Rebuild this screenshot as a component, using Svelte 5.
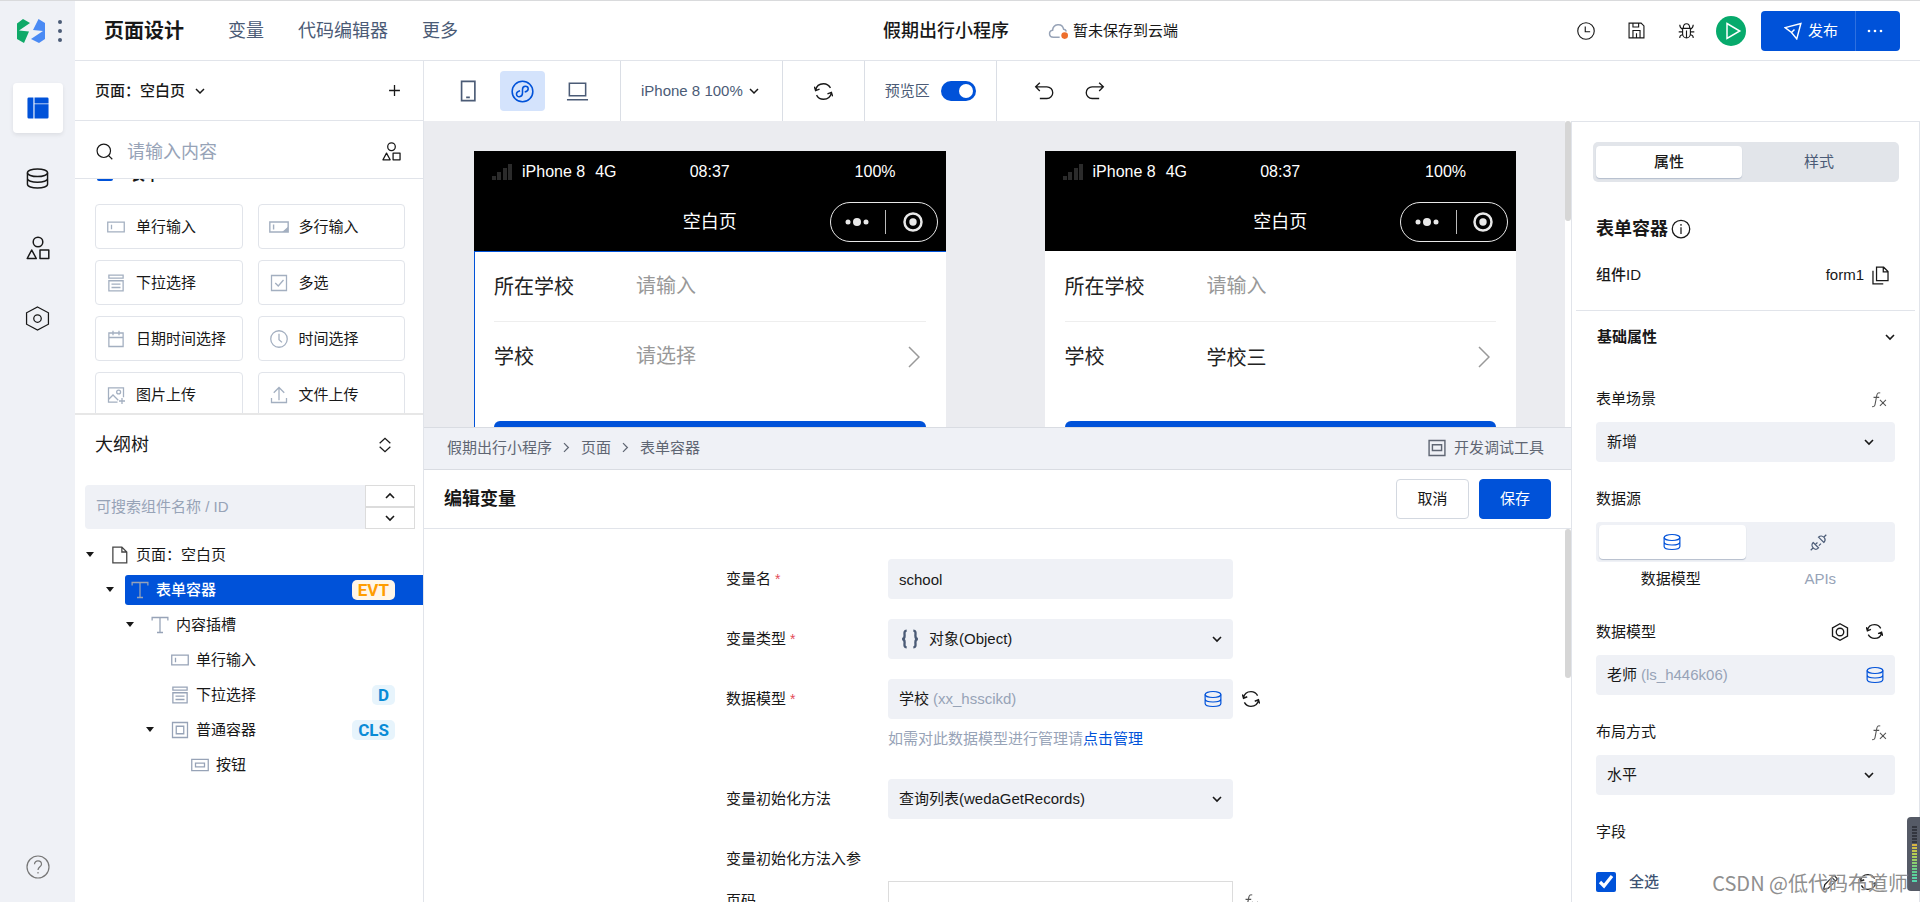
<script lang="ts">
  // 24x24 line icons, drawn with currentColor.
  const icons: Record<string, string> = {
    layout:
      '<path d="M.5 2A1.500 1.500 0 0 1 2 .5h5v23H2A1.500 1.500 0 0 1 .5 22zM8.200 8H23.500v14a1.500 1.500 0 0 1-1.500 1.500H8.200zM8.200.5H22A1.500 1.500 0 0 1 23.500 2v4.500H8.200z" fill="currentColor" stroke="none"/><path d="M8.200 7.200h15.300" opacity=".5"/>',
    database:
      '<ellipse cx="12" cy="6" rx="10.500" ry="4"/><path d="M1.500 6v12c0 2.300 4.700 4 10.500 4s10.500-1.700 10.500-4V6M1.500 12c0 2.300 4.700 4 10.500 4s10.500-1.700 10.500-4"/>',
    shapes:
      '<circle cx="12" cy="6" r="4.800"/><path d="M5.700 14 10.300 22.500H1.200zM14 14h8.800v8.500H14z" stroke-linejoin="round"/>',
    hexagon: '<path d="M12 1 22.500 6.500v11L12 23 1.500 17.500v-11z"/><circle cx="12" cy="12" r="3.600"/>',
    nut: '<path d="M12 1 22 6.500v11L12 23 2 17.500v-11z"/><circle cx="12" cy="12" r="5"/>',
    help:
      '<circle cx="12" cy="12" r="11"/><path d="M8.500 9.200c0-4.500 7-4.300 7 0 0 2.600-3.500 2.600-3.500 5.800M12 17v1.600"/>',
    chevronDown: '<path d="m6 9 6 6 6-6"/>',
    chevronUp: '<path d="m6 15 6-6 6 6"/>',
    chevronRight: '<path d="m8 5 7 7-7 7"/>',
    plus: '<path d="M12 2v20M2 12h20"/>',
    search: '<circle cx="11" cy="11" r="9.500"/><path d="m17.500 17.500 5.500 5.500"/>',
    sort: '<path d="M4 9.500 12 2l8 7.500M4 14.500 12 22l8-7.500"/>',
    phone: '<path d="M5 1.500h14.500v21H5zM10 19h4"/>',
    mini:
      '<circle cx="12" cy="12" r="10.800"/><path d="M9.500 11.200c-6 1.500-3.800 6.800-.7 6.300 2.600-.4 3.200-2.200 3.200-4V10c0-2 .8-3.500 3-3.500 3.600 0 4.500 4.800-.7 6"/>',
    laptop: '<path d="M3.500 3.500h17v13h-17zM1 20.500h22"/>',
    refresh:
      '<path d="M2 10.500C3 5 7 2.200 12 2.200c3.800 0 7 2 8.800 5.300M22 13.500c-1 5.500-5 8.300-10 8.300-3.800 0-7-2-8.800-5.300M.5 6l1.500 5 5-2M23.500 18l-1.500-5-5 2"/>',
    undo: '<path d="M7 2 2 7l5 5M2 7h13.500a7 7 0 0 1 0 14H7"/>',
    redo: '<path d="m17 2 5 5-5 5M22 7H8.500a7 7 0 0 0 0 14H17"/>',
    cloud:
      '<path d="M14 19.500H6.500C.500 19.500.500 12 5.500 11.200c.5-8 11.500-9.500 13.300-1.200 1.600.3 2.700 1.200 3.200 2.500"/><circle cx="20" cy="17.500" r="4" fill="#ed6f2d" stroke="none"/>',
    clock: '<circle cx="12" cy="12" r="11"/><path d="M11 6v7h6.500"/>',
    save: '<path d="M1.500 1.500h17l4 4v17h-21zM7 22V12h10v10M7 2v5h8V2M12 16v6"/>',
    bug:
      '<path d="M6.500 9h11v7.500a5.500 6 0 0 1-11 0zM7.500 8.500c0-8 9-8 9 0M12 12v10M2.500 4c0 3 1.500 5 4 6.500M21.500 4c0 3-1.500 5-4 6.500M1 14h5.500M17.500 14H23M2.500 22.500c0-3 1.500-4.500 4.500-4.500M21.500 22.500c0-3-1.500-4.500-4.500-4.500"/>',
    play: '<path d="m4 2 17 10L4 22z"/>',
    send: '<path d="M1.500 7.500 22.500 2 17 22.500 10 14zM10 14l4-4"/>',
    more: '<g fill="currentColor" stroke="none"><circle cx="3" cy="12" r="2"/><circle cx="12" cy="12" r="2"/><circle cx="21" cy="12" r="2"/></g>',
    input: '<path d="M1 5.500h22v13H1zM6 9v6"/>',
    textarea:
      '<path d="M1 6h22v12H1zM5.500 9v6"/><path d="M22 13.500V17h-4z" fill="currentColor"/>',
    select: '<path d="M2.500 1.500h19v4h-19zM2.500 9h19v13.500h-19zM6 13.500h12M6 18h12"/>',
    check: '<path d="M2 2h20v20H2zM7 12l4 4 7-8"/>',
    calendar: '<path d="M2.500 4h19v18h-19zM2.500 10h19M8 1v6M16 1v6"/>',
    time: '<circle cx="12" cy="12" r="11"/><path d="M12 5v8l4 3.500"/>',
    image:
      '<path d="M14 21.500H2v-19h20V15M2 18l6-6 7 7M20 16v8M16 20h8"/><circle cx="15.500" cy="8" r="2.600"/>',
    upload: '<path d="M2 16v6h20v-6M12 19V2M5 9l7-7 7 7"/>',
    page: '<path d="M2.500 1.500h12l6.500 6.500v14.500H2.500zM14.500 1.500V8H21"/>',
    text: '<path d="M1.500 6V2h21v4M12 2v20M8 22h8"/>',
    box: '<path d="M2 2h20v20H2zM7 7h10v10H7z"/>',
    button: '<path d="M1 4.500h22v15H1zM6 9.500h12v5H6z"/>',
    info: '<circle cx="12" cy="12" r="10.500"/><path d="M12 10v8M12 6v2"/>',
    copy: '<path d="M7 1.500h9l5.500 5.500v11.500H7zM15.500 2v5.500h6M2.500 6v16.500h13"/>',
    link:
      '<path d="m1 23 4-4M19 5l4-4M4.500 12l7.500 7.500c-3 3-6 2.500-7.500 0-2-2-2.500-5 0-7.500zM12 4.500l7.500 7.500c2.500-2.500 2-5.500 0-7.500-2-2-5-2.500-7.500 0zM7.500 15l3-3M12.500 16.500l3-3"/>',
    edit: '<path d="m2 22 2-7L17 2l5 5L9 20zM14 5l5 5"/>',
    fx:
      '<path d="M14.500 3c-2.500-1.500-4.500.5-5 3.500L7 19.500c-.5 2-2 3-4 2.500M5 9h8M14 12.500l8.500 8.500M22.500 12.500 14 21"/>',
    braces:
      '<path d="M8 2C4.500 2 5.500 5.500 5.500 8S5 12 2.500 12C5 12 5.500 13.500 5.500 16S4.500 22 8 22M16 2c3.500 0 2.500 3.500 2.500 6s.5 4 3 4c-2.500 0-3 1.500-3 4s1 6-2.500 6"/>',
    monitor: '<path d="M2.500 3h19v18h-19zM6.500 8h11v7h-11z"/>',
  };

  const palette = [
    { icon: 'input', name: '单行输入' },
    { icon: 'textarea', name: '多行输入' },
    { icon: 'select', name: '下拉选择' },
    { icon: 'check', name: '多选' },
    { icon: 'calendar', name: '日期时间选择' },
    { icon: 'time', name: '时间选择' },
    { icon: 'image', name: '图片上传' },
    { icon: 'upload', name: '文件上传' },
  ];

  const tree = [
    { depth: 0, icon: 'page', name: '页面：空白页', open: true, tag: '' },
    { depth: 1, icon: 'text', name: '表单容器', open: true, tag: 'EVT' },
    { depth: 2, icon: 'text', name: '内容插槽', open: true, tag: '' },
    { depth: 3, icon: 'input', name: '单行输入', open: false, tag: '' },
    { depth: 3, icon: 'select', name: '下拉选择', open: false, tag: 'D' },
    { depth: 3, icon: 'box', name: '普通容器', open: true, tag: 'CLS' },
    { depth: 4, icon: 'button', name: '按钮', open: false, tag: '' },
  ];

  const phones = [
    { school: '', active: true },
    { school: '学校三', active: false },
  ];

  let selected = $state('表单容器');
  let preview = $state(true);
  let allFields = $state(true);
  let varName = $state('school');
</script>

{#snippet icon(name: string, size: number, width: number = 1.5)}
  <svg
    class="icon"
    width={size}
    height={size}
    viewBox="0 0 24 24"
    fill="none"
    stroke="currentColor"
    stroke-width={width}
    aria-hidden="true">{@html icons[name]}</svg
  >
{/snippet}

{#snippet dropdown(id: string, value: string, lead: string = '')}
  <div class="dropdown" class:lead>
    {#if lead}<span class="dropdown-lead">{@render icon(lead, 20, 2.8)}</span>{/if}
    <select {id}><option>{value}</option></select>
    <span class="dropdown-arrow">{@render icon('chevronDown', 16, 2.4)}</span>
  </div>
{/snippet}

<div class="shell">
  <aside class="rail">
    <div class="brand">
      <svg width="28" height="24" viewBox="0 0 28 24" aria-hidden="true">
        <path d="M0 4.500 6 0l7 4L2 11.500l10 1L7 24l-7-4z" fill="#0fa968" />
        <path d="m21.500 0 6.500 4v16l-6 4-8-4 12-8-10-1z" fill="#4a8af4" />
      </svg>
      <span class="brand-dots"><i></i><i></i><i></i></span>
    </div>
    <button class="rail-item current" aria-label="页面">{@render icon('layout', 22)}</button>
    <button class="rail-item" aria-label="数据源">{@render icon('database', 23, 1.5)}</button>
    <button class="rail-item" aria-label="组件">{@render icon('shapes', 24, 1.5)}</button>
    <button class="rail-item" aria-label="设置">{@render icon('hexagon', 25, 1.2)}</button>
    <button class="rail-item bottom" aria-label="帮助">{@render icon('help', 24, 1.2)}</button>
  </aside>

  <div class="main">
    <header class="topbar">
      <nav class="nav">
        <a class="current" href="#design">页面设计</a>
        <a href="#vars">变量</a>
        <a href="#code">代码编辑器</a>
        <a href="#more">更多</a>
      </nav>
      <h1>假期出行小程序</h1>
      <div class="saved"><span>{@render icon('cloud', 20, 1.8)}</span>暂未保存到云端</div>
      <div class="actions">
        <button aria-label="历史">{@render icon('clock', 18, 1.5)}</button>
        <button aria-label="保存页面">{@render icon('save', 17, 1.6)}</button>
        <button aria-label="调试">{@render icon('bug', 17, 1.6)}</button>
        <button class="run" aria-label="运行">{@render icon('play', 18, 2)}</button>
        <div class="publish">
          <button>{@render icon('send', 18, 1.9)}发布</button>
          <button class="publish-more" aria-label="更多发布选项">{@render icon('more', 16)}</button>
        </div>
      </div>
    </header>

    <div class="body">
      <section class="left">
        <div class="page-row">
          <button class="page-pick">页面：空白页 {@render icon('chevronDown', 16, 2.2)}</button>
          <button aria-label="新建页面">{@render icon('plus', 13, 2.4)}</button>
        </div>
        <div class="find">
          {@render icon('search', 17, 1.7)}
          <input placeholder="请输入内容" aria-label="搜索组件" />
          {@render icon('shapes', 19, 1.6)}
        </div>
        <div class="palette">
          <h2><i></i>表单</h2>
          <div class="cards">
            {#each palette as item}
              <button class="card">{@render icon(item.icon, item.icon === 'textarea' ? 20 : 18, 1.7)}{item.name}</button>
            {/each}
          </div>
        </div>
        <div class="outline">
          <div class="outline-head">
            <h2>大纲树</h2>
            {@render icon('sort', 16, 1.9)}
          </div>
          <div class="outline-find">
            <input placeholder="可搜索组件名称 / ID" aria-label="搜索大纲树" />
            <div class="stepper">
              <button aria-label="上一个">{@render icon('chevronUp', 16, 2.4)}</button>
              <button aria-label="下一个">{@render icon('chevronDown', 16, 2.4)}</button>
            </div>
          </div>
          <ul class="tree">
            {#each tree as node}
              <li style="padding-left: {node.depth * 20}px">
                <span class="caret" class:open={node.open}></span>
                <button
                  class="node"
                  class:selected={selected === node.name}
                  onclick={() => (selected = node.name)}
                >
                  <span class="node-icon">{@render icon(node.icon, 18, 1.7)}</span>
                  {node.name}
                  {#if node.tag}<b class="tag" class:evt={node.tag === 'EVT'}>{node.tag}</b>{/if}
                </button>
              </li>
            {/each}
          </ul>
        </div>
      </section>

      <div class="stage">
        <div class="toolbar">
          <div class="group devices">
            <button aria-label="手机">{@render icon('phone', 22, 1.8)}</button>
            <button class="on" aria-label="小程序">{@render icon('mini', 23, 1.6)}</button>
            <button aria-label="电脑">{@render icon('laptop', 23, 1.6)}</button>
          </div>
          <div class="group"><button class="zoom">iPhone 8 100%{@render icon('chevronDown', 16, 2.2)}</button></div>
          <div class="group reload"><button aria-label="刷新">{@render icon('refresh', 19, 1.7)}</button></div>
          <div class="group">
            <label class="switch">预览区<input type="checkbox" role="switch" bind:checked={preview} /></label>
          </div>
          <div class="group history">
            <button aria-label="撤销">{@render icon('undo', 20, 1.6)}</button>
            <button aria-label="重做">{@render icon('redo', 20, 1.6)}</button>
          </div>
        </div>

        <div class="columns">
          <div class="work">
            <div class="canvas-row">
              <div class="canvas">
                {#each phones as phone, i}
                  <div class="phone" class:active={phone.active}>
                    <div class="phone-top">
                      <div class="status">
                        <span class="carrier">
                          <svg width="20" height="16" viewBox="0 0 20 16" fill="#2b2b2b" aria-hidden="true">
                            <path d="M0 12h4v4H0zM5 8h4v8H5zM11 4h4v12h-4zM16 0h4v16h-4z" />
                          </svg>
                          <span>iPhone 8</span><span>4G</span>
                        </span>
                        <span>08:37</span>
                        <span class="battery">100%</span>
                      </div>
                      <div class="phone-nav">
                        <span></span>
                        <span>空白页</span>
                        <span class="capsule">
                          <svg width="24" height="8" viewBox="0 0 24 8" fill="#e8e8e8" aria-hidden="true">
                            <circle cx="3" cy="4" r="2.500" /><circle cx="12" cy="4" r="4" /><circle cx="21" cy="4" r="2.500" />
                          </svg>
                          <i></i>
                          <svg width="20" height="20" viewBox="0 0 20 20" aria-hidden="true">
                            <circle cx="10" cy="10" r="8.500" fill="none" stroke="#e8e8e8" stroke-width="2.500" />
                            <circle cx="10" cy="10" r="3.700" fill="#e8e8e8" />
                          </svg>
                        </span>
                      </div>
                    </div>
                    <div class="phone-form">
                      <div class="line">
                        <label for="school-name-{i}">所在学校</label>
                        <input id="school-name-{i}" placeholder="请输入" />
                      </div>
                      <div class="line last">
                        <label for="school-{i}">学校</label>
                        <input id="school-{i}" placeholder="请选择" value={phone.school} readonly />
                        <svg width="12" height="22" viewBox="0 0 12 22" fill="none" stroke="#999" stroke-width="1.500" aria-hidden="true">
                          <path d="m1 1 10 10L1 21" />
                        </svg>
                      </div>
                      <button class="submit" aria-label="提交"></button>
                    </div>
                  </div>
                {/each}
              </div>
              <div class="scroll"><i class="short"></i></div>
            </div>

            <div class="crumbs">
              <a href="#app">假期出行小程序</a>
              {@render icon('chevronRight', 15, 2)}
              <a href="#page">页面</a>
              {@render icon('chevronRight', 15, 2)}
              <a href="#form">表单容器</a>
              <button class="devtool">{@render icon('monitor', 20, 1.7)}开发调试工具</button>
            </div>

            <div class="editor-head">
              <h2>编辑变量</h2>
              <button>取消</button>
              <button class="primary">保存</button>
            </div>

            <div class="editor">
              <form class="fields">
                <label for="var-name">变量名<em>*</em></label>
                <input id="var-name" class="filled" bind:value={varName} />
                <span></span>

                <label for="var-type">变量类型<em>*</em></label>
                {@render dropdown('var-type', '对象(Object)', 'braces')}
                <span></span>

                <label for="var-model">数据模型<em>*</em></label>
                <button type="button" id="var-model" class="model">学校 <small>(xx_hsscikd)</small>{@render icon('database', 18, 1.6)}</button>
                <span class="side">{@render icon('refresh', 18, 1.8)}</span>

                <p class="hint">如需对此数据模型进行管理请<a href="#manage">点击管理</a></p>

                <label for="var-init">变量初始化方法</label>
                {@render dropdown('var-init', '查询列表(wedaGetRecords)')}
                <span></span>

                <p class="sub">变量初始化方法入参</p>

                <label for="var-page">页码</label>
                <input id="var-page" class="outlined" />
                <span class="side fx">{@render icon('fx', 17, 1.6)}</span>
              </form>
              <div class="scroll"><i class="long"></i></div>
            </div>
          </div>

          <aside class="props">
            <div class="tabs">
              <button class="on">属性</button>
              <button>样式</button>
            </div>
            <h2>表单容器 {@render icon('info', 20, 1.5)}</h2>
            <div class="comp-id"><b>组件ID</b><span>form1</span>{@render icon('copy', 19, 1.6)}</div>
            <div class="fold"><h3>基础属性</h3>{@render icon('chevronDown', 16, 2.4)}</div>

            <div class="prop">
              <div class="prop-head"><label for="p-scene">表单场景</label><span class="fx">{@render icon('fx', 17, 1.5)}</span></div>
              {@render dropdown('p-scene', '新增')}
            </div>
            <div class="prop source">
              <div class="prop-head"><span>数据源</span></div>
              <div class="segment">
                <button class="on" aria-label="数据模型">{@render icon('database', 18, 1.6)}</button>
                <button aria-label="APIs">{@render icon('link', 17, 1.7)}</button>
              </div>
              <div class="segment-names"><span>数据模型</span><span>APIs</span></div>
            </div>
            <div class="prop">
              <div class="prop-head">
                <label for="p-model">数据模型</label>
                <span class="pair">{@render icon('nut', 18, 1.8)}{@render icon('refresh', 17, 1.9)}</span>
              </div>
              <button id="p-model" class="model">老师 <small>(ls_h446k06)</small>{@render icon('database', 18, 1.6)}</button>
            </div>
            <div class="prop">
              <div class="prop-head"><label for="p-layout">布局方式</label><span class="fx">{@render icon('fx', 17, 1.5)}</span></div>
              {@render dropdown('p-layout', '水平')}
            </div>
            <div class="prop">
              <div class="prop-head"><span>字段</span></div>
              <div class="all">
                <label><input type="checkbox" bind:checked={allFields} />全选</label>
                <span class="all-tools">{@render icon('edit', 17, 1.8)}{@render icon('refresh', 18, 1.8)}</span>
              </div>
            </div>
          </aside>
        </div>
      </div>
    </div>
  </div>

  <div class="meter" aria-hidden="true"><i></i></div>
  <div class="watermark">CSDN @低代码布道师</div>
</div>

<style>
  :global(body) {
    margin: 0;
  }
  .shell,
  .shell :global(*) {
    box-sizing: border-box;
  }
  .shell {
    --blue: #0052d9;
    --line: #e1e4ea;
    --fill: #eff1f6;
    --ink: #181818;
    --slate: #4b5b76;
    --muted: #97a3b7;
    position: relative;
    display: flex;
    height: 100vh;
    overflow: hidden;
    border-top: 1px solid #d9dadc;
    font-family: 'Liberation Sans', 'Noto Sans CJK SC', sans-serif;
    font-size: 15px;
    line-height: 20px;
    color: var(--ink);
    background: #fff;
  }
  button,
  input,
  select {
    margin: 0;
    padding: 0;
    border: 0;
    background: none;
    font: inherit;
    color: inherit;
    outline: none;
  }
  button {
    display: flex;
    align-items: center;
    justify-content: center;
    white-space: nowrap;
    cursor: pointer;
  }
  h1,
  h2,
  h3,
  p,
  ul {
    margin: 0;
    padding: 0;
    font-size: inherit;
    list-style: none;
  }
  a {
    color: inherit;
    text-decoration: none;
  }
  em,
  small {
    font-style: normal;
    font-size: inherit;
  }
  .icon {
    display: block;
    flex: none;
  }

  /* rail */
  .rail {
    flex: 0 0 75px;
    display: flex;
    flex-direction: column;
    align-items: center;
    gap: 20px;
    padding-bottom: 10px;
    background: var(--fill);
  }
  .brand {
    display: flex;
    align-items: center;
    gap: 13px;
    height: 60px;
    padding-left: 4px;
  }
  .brand-dots {
    display: grid;
    gap: 5px;
  }
  .brand-dots i {
    width: 4px;
    height: 4px;
    border-radius: 50%;
    background: var(--slate);
  }
  .rail-item {
    width: 50px;
    height: 50px;
    border-radius: 4px;
  }
  .rail-item.current {
    margin-top: 2px;
    color: var(--blue);
    background: #fff;
    box-shadow: 0 2px 4px rgba(0, 0, 0, 0.08);
  }
  .rail-item.bottom {
    margin-top: auto;
    color: #777;
  }

  /* top bar */
  .main {
    flex: 1;
    min-width: 0;
    display: flex;
    flex-direction: column;
  }
  .topbar {
    flex: 0 0 60px;
    display: flex;
    align-items: center;
    padding-right: 20px;
    border-bottom: 1px solid var(--line);
    white-space: nowrap;
  }
  .nav {
    flex: 0 0 44%;
    display: flex;
    align-items: center;
    gap: 34px;
    margin-right: 5px;
    padding-left: 29px;
    font-size: 18px;
    color: var(--slate);
  }
  .nav .current {
    margin-right: 10px;
    font-size: 20px;
    font-weight: 700;
    color: var(--ink);
  }
  h1 {
    font-size: 18px;
    font-weight: 500;
  }
  .saved {
    display: flex;
    align-items: center;
    gap: 5px;
    margin-left: 39px;
  }
  .saved span {
    color: var(--muted);
  }
  .actions {
    display: flex;
    align-items: center;
    margin-left: auto;
  }
  .actions > button {
    width: 50px;
    height: 30px;
  }
  .actions > .run {
    width: 30px;
    margin: 0 15px 0 5px;
    padding-left: 4px;
    border-radius: 50%;
    color: #fff;
    background: #07aa6c;
  }
  .publish {
    display: flex;
    height: 40px;
    border-radius: 4px;
    color: #fff;
    background: var(--blue);
  }
  .publish button {
    gap: 6px;
    width: 94px;
    padding-left: 6px;
  }
  .publish .publish-more {
    width: 45px;
    padding: 0 6px 0 0;
    border-left: 1px solid #2e70e0;
  }

  /* left panel */
  .body {
    flex: 1;
    display: flex;
    min-height: 0;
  }
  .left {
    flex: 0 0 349px;
    display: flex;
    flex-direction: column;
    min-height: 0;
    border-right: 1px solid var(--line);
  }
  .page-row,
  .find {
    display: flex;
    align-items: center;
    padding: 0 22px 0 20px;
    border-bottom: 1px solid var(--line);
  }
  .page-row {
    flex: 0 0 60px;
    justify-content: space-between;
    font-weight: 500;
  }
  .page-pick {
    gap: 7px;
  }
  .find {
    flex: 0 0 58px;
    gap: 14px;
    padding: 4px 22px 0 21px;
    font-size: 18px;
  }
  .find input {
    flex: 1;
    min-width: 0;
  }
  input::placeholder {
    color: var(--muted);
    opacity: 1;
  }
  .palette {
    flex: 0 0 234px;
    overflow: hidden;
    padding: 0 18px 0 20px;
  }
  .palette h2 {
    display: flex;
    align-items: center;
    gap: 17px;
    height: 20px;
    margin: -14px 0 19px;
    padding-left: 2px;
  }
  .palette h2 i {
    width: 16px;
    height: 12px;
    border-radius: 2px;
    background: var(--blue);
  }
  .cards {
    display: grid;
    grid-template-columns: 1fr 1fr;
    gap: 11px 15px;
  }
  .card {
    justify-content: flex-start;
    gap: 10px;
    height: 45px;
    padding-left: 10px;
    border: 1px solid var(--line);
    border-radius: 4px;
  }
  .card :global(.icon) {
    width: 20px;
    color: #a3afc0;
  }

  /* outline */
  .outline {
    flex: 1;
    min-height: 0;
    overflow: hidden;
    border-top: 2px solid #e7e7e7;
  }
  .outline-head {
    display: flex;
    align-items: center;
    justify-content: space-between;
    height: 60px;
    padding: 0 30px 0 20px;
  }
  .outline-head h2 {
    font-size: 18px;
    font-weight: 400;
  }
  .outline-find {
    display: flex;
    height: 44px;
    margin: 10px 8px 8px 10px;
  }
  .outline-find input {
    flex: 1;
    min-width: 0;
    padding: 0 11px;
    border-radius: 4px 0 0 4px;
    background: var(--fill);
  }
  .stepper {
    flex: 0 0 50px;
    display: grid;
    grid-template-rows: 1fr 1fr;
  }
  .stepper button {
    border: 1px solid #dcdcdc;
  }
  .tree li {
    display: flex;
    align-items: center;
    height: 35px;
  }
  .caret {
    flex: 0 0 30px;
    display: flex;
    justify-content: center;
  }
  .caret.open::before {
    content: '';
    border: 4px solid transparent;
    border-top: 5px solid var(--ink);
    border-bottom: 0;
  }
  .node {
    flex: 1;
    justify-content: flex-start;
    gap: 6px;
    height: 30px;
    padding: 0 28px 0 5px;
    border-radius: 3px 0 0 3px;
  }
  .node.selected {
    color: #fff;
    font-weight: 500;
    background: var(--blue);
  }
  .node-icon {
    width: 20px;
    display: flex;
    justify-content: center;
    color: var(--muted);
  }
  li:first-child .node-icon {
    color: #444;
  }
  .tag {
    height: 20px;
    margin-left: auto;
    padding: 0 6px;
    border-radius: 5px;
    font-family: Roboto, sans-serif;
    font-size: 17px;
    color: #0a8bd6;
    background: #e7f4fc;
  }
  .tag.evt {
    color: #ff9d00;
    background: #fff6e8;
  }

  /* toolbar */
  .stage {
    flex: 1;
    min-width: 0;
    display: flex;
    flex-direction: column;
  }
  .toolbar {
    flex: 0 0 60px;
    display: flex;
    color: var(--slate);
  }
  .group {
    display: flex;
    align-items: center;
    padding: 0 20px;
    border-right: 1px solid #dadee5;
  }
  .devices {
    gap: 10px;
    padding-left: 21px;
  }
  .devices button {
    width: 45px;
    height: 40px;
    border-radius: 4px;
  }
  .devices .on {
    color: var(--blue);
    background: #d4e3fc;
  }
  .zoom {
    gap: 3px;
  }
  .zoom :global(.icon),
  .reload,
  .history {
    color: var(--ink);
  }
  .reload {
    padding: 0 31px;
  }
  .switch {
    display: flex;
    align-items: center;
    gap: 11px;
  }
  .switch input {
    appearance: none;
    width: 35px;
    height: 20px;
    padding: 3px;
    border-radius: 10px;
    background: #b8bfcc;
  }
  .switch input::before {
    content: '';
    display: block;
    width: 14px;
    height: 14px;
    border-radius: 50%;
    background: #fff;
  }
  .switch input:checked {
    background: var(--blue);
  }
  .switch input:checked::before {
    margin-left: 15px;
  }
  .history {
    gap: 31px;
    padding: 0 37px;
    border: 0;
  }

  /* canvas */
  .columns {
    flex: 1;
    min-height: 0;
    display: flex;
  }
  .work {
    flex: 1;
    min-width: 0;
    display: flex;
    flex-direction: column;
  }
  .canvas-row {
    flex: 0 0 306px;
    display: flex;
    overflow: hidden;
  }
  .canvas {
    flex: 1;
    display: flex;
    gap: 99px;
    padding: 30px 49px 0 50px;
    background: #ebecf0;
  }
  .scroll {
    flex: 0 0 6px;
    background: #fff;
  }
  .scroll i {
    display: block;
    border-radius: 3px;
    background: #d6d6d6;
  }
  .short {
    height: 100px;
  }
  .long {
    height: 149px;
  }
  .phone {
    flex: 1;
    min-width: 0;
    display: flex;
    flex-direction: column;
    background: #fff;
  }
  .phone-top {
    height: 100px;
    color: #fff;
    background: #000;
  }
  .status,
  .phone-nav {
    display: grid;
    grid-template-columns: 1fr auto 1fr;
    align-items: center;
  }
  .status {
    height: 42px;
    padding: 0 50px 0 18px;
    font-size: 16px;
  }
  .status > :nth-child(2) {
    margin-left: 32px;
  }
  .carrier {
    display: flex;
    align-items: center;
    gap: 10px;
  }
  .battery,
  .capsule {
    justify-self: end;
  }
  .phone-nav {
    height: 58px;
    padding: 0 8px;
    font-size: 18px;
  }
  .capsule {
    display: flex;
    align-items: center;
    justify-content: space-between;
    width: 108px;
    height: 40px;
    padding: 0 14px;
    border: 1px solid #e8e8e8;
    border-radius: 20px;
  }
  .capsule i {
    width: 1px;
    height: 24px;
    background: #bbb;
  }
  .phone-form {
    flex: 1;
    display: flex;
    flex-direction: column;
    padding: 0 20px;
    border-top: 1px solid transparent;
    color: #222;
  }
  .active .phone-form {
    padding-left: 19px;
    border-top-color: var(--blue);
    border-left: 1px solid var(--blue);
  }
  .line {
    flex: 0 0 70px;
    display: flex;
    align-items: center;
    padding-right: 6px;
    border-bottom: 1px solid #eee;
    font-size: 20px;
  }
  .line.last {
    border-color: transparent;
  }
  .line label {
    flex: 0 0 142px;
  }
  .line input {
    flex: 1;
    min-width: 0;
  }
  .line input::placeholder {
    color: #999;
  }
  .submit {
    height: 48px;
    margin-top: 29px;
    border-radius: 6px;
    background: var(--blue);
  }

  /* breadcrumb and editor */
  .crumbs {
    flex: 0 0 43px;
    display: flex;
    align-items: center;
    gap: 7px;
    padding: 0 27px 2px 23px;
    border: 1px solid #d9dce2;
    border-width: 1px 0;
    color: #5f6673;
    background: var(--fill);
    z-index: 1;
  }
  .devtool {
    gap: 7px;
    margin-left: auto;
  }
  .editor-head {
    flex: 0 0 59px;
    display: flex;
    align-items: center;
    gap: 10px;
    padding: 0 20px;
    border-bottom: 1px solid var(--line);
  }
  .editor-head h2 {
    flex: 1;
    font-size: 18px;
  }
  .editor-head button {
    width: 73px;
    height: 40px;
    border: 1px solid #d3d8e0;
    border-radius: 4px;
  }
  .editor-head .primary {
    width: 72px;
    border-color: var(--blue);
    color: #fff;
    background: var(--blue);
  }
  .editor {
    flex: 1;
    min-height: 0;
    display: flex;
    overflow: hidden;
  }
  .fields {
    display: grid;
    grid-template-columns: 162px 345px 36px;
    grid-auto-rows: max-content;
    align-items: center;
    align-content: start;
    row-gap: 20px;
    margin: 0 auto;
    padding: 30px 0 0 6px;
  }
  .fields em {
    padding-left: 4px;
    color: #e34d59;
    font-size: 14px;
  }
  .filled,
  .outlined {
    height: 40px;
    padding: 0 11px;
    border-radius: 4px;
    background: var(--fill);
  }
  .outlined {
    border: 1px solid #dcdcdc;
    border-radius: 0;
    background: #fff;
  }
  .hint,
  .sub {
    grid-column: 2 / -1;
  }
  .hint {
    margin: -10px 0 10px;
    color: var(--muted);
  }
  .hint a {
    color: var(--blue);
  }
  .sub {
    grid-column: 1 / -1;
    margin: 10px 0 -8px;
  }
  .side {
    padding-left: 9px;
  }
  .fx {
    color: #555;
  }
  .dropdown {
    display: grid;
    grid-template-columns: auto 1fr auto;
    align-items: center;
    height: 40px;
    border-radius: 4px;
    background: var(--fill);
  }
  .dropdown select {
    grid-area: 1 / 1 / 2 / 4;
    appearance: none;
    height: 40px;
    padding: 0 11px;
  }
  .dropdown.lead select {
    padding-left: 41px;
  }
  .dropdown-lead {
    grid-area: 1 / 1;
    padding-left: 12px;
    color: var(--slate);
  }
  .dropdown-arrow {
    grid-area: 1 / 3;
    padding-right: 8px;
    pointer-events: none;
  }
  .model {
    width: 100%;
    height: 40px;
    justify-content: flex-start;
    gap: 4px;
    padding: 0 11px;
    border-radius: 4px;
    background: var(--fill);
  }
  .model small {
    flex: 1;
    text-align: left;
    color: var(--muted);
  }
  .model :global(.icon) {
    color: var(--blue);
  }

  /* property panel */
  .props {
    flex: 0 0 349px;
    overflow: hidden;
    padding: 20px 24px 0;
    border: 1px solid var(--line);
    border-bottom: 0;
  }
  .tabs {
    display: grid;
    grid-template-columns: 19fr 20fr;
    height: 40px;
    margin: 0 -4px 0 -3px;
    padding: 4px 3px;
    border-radius: 5px;
    color: var(--slate);
    background: #e2e5ea;
  }
  .tabs .on,
  .segment .on {
    border-radius: 4px;
    background: #fff;
    box-shadow: 0 1px 1px #b4bdcc;
  }
  .tabs .on {
    font-weight: 500;
    color: var(--ink);
  }
  .props h2 {
    display: flex;
    align-items: center;
    gap: 3px;
    margin-top: 37px;
    font-size: 18px;
  }
  .comp-id {
    display: flex;
    align-items: center;
    gap: 7px;
    margin-top: 26px;
    padding-right: 5px;
  }
  .comp-id b {
    flex: 1;
    font-weight: 500;
  }
  .fold {
    display: flex;
    align-items: center;
    justify-content: space-between;
    height: 52px;
    margin: 25px -20px 0;
    padding: 0 17px 0 21px;
    border-top: 1px solid var(--line);
  }
  .prop {
    display: flex;
    flex-direction: column;
    gap: 13px;
    margin-bottom: 27px;
  }
  .fold + .prop {
    margin-top: 27px;
  }
  .prop-head {
    display: flex;
    align-items: center;
    justify-content: space-between;
    height: 20px;
    padding-right: 8px;
  }
  .pair {
    display: flex;
    gap: 17px;
    padding-right: 4px;
  }
  .props .dropdown-arrow {
    padding-right: 18px;
  }
  .segment,
  .segment-names {
    display: grid;
    grid-template-columns: 1fr 1fr;
  }
  .segment {
    height: 40px;
    padding: 3px;
    border-radius: 4px;
    color: var(--slate);
    background: var(--fill);
  }
  .segment .on {
    color: var(--blue);
  }
  .source {
    margin-bottom: 33px;
  }
  .segment-names {
    margin-top: -6px;
    text-align: center;
  }
  .segment-names span:last-child {
    color: var(--muted);
  }
  .all,
  .all label,
  .all-tools {
    display: flex;
    align-items: center;
  }
  .all {
    justify-content: space-between;
    margin-top: 17px;
    padding-right: 18px;
  }
  .all label {
    gap: 13px;
    font-weight: 500;
    color: #3e5372;
  }
  .all input {
    width: 20px;
    height: 20px;
    accent-color: var(--blue);
  }
  .all-tools {
    gap: 20px;
  }

  /* overlays */
  .watermark {
    position: absolute;
    right: 12px;
    bottom: 4px;
    font-family: 'Noto Sans CJK SC', sans-serif;
    font-size: 20px;
    line-height: 30px;
    color: #8f8f8f;
    text-shadow: 0 0 2px #fff;
    pointer-events: none;
  }
  .meter {
    position: absolute;
    right: 0;
    bottom: 11px;
    width: 13px;
    height: 74px;
    padding: 9px 3px 8px 5px;
    border-radius: 4px 0 0 4px;
    background: #555a66;
  }
  .meter i {
    display: block;
    height: 100%;
    background:
      repeating-linear-gradient(transparent 0 2px, #555a66 2px 3px),
      linear-gradient(#33363f 0 30%, #e0b040 30%, #b5cf52 50%, #5fcf8f 80%, #54d6b4);
  }
</style>
